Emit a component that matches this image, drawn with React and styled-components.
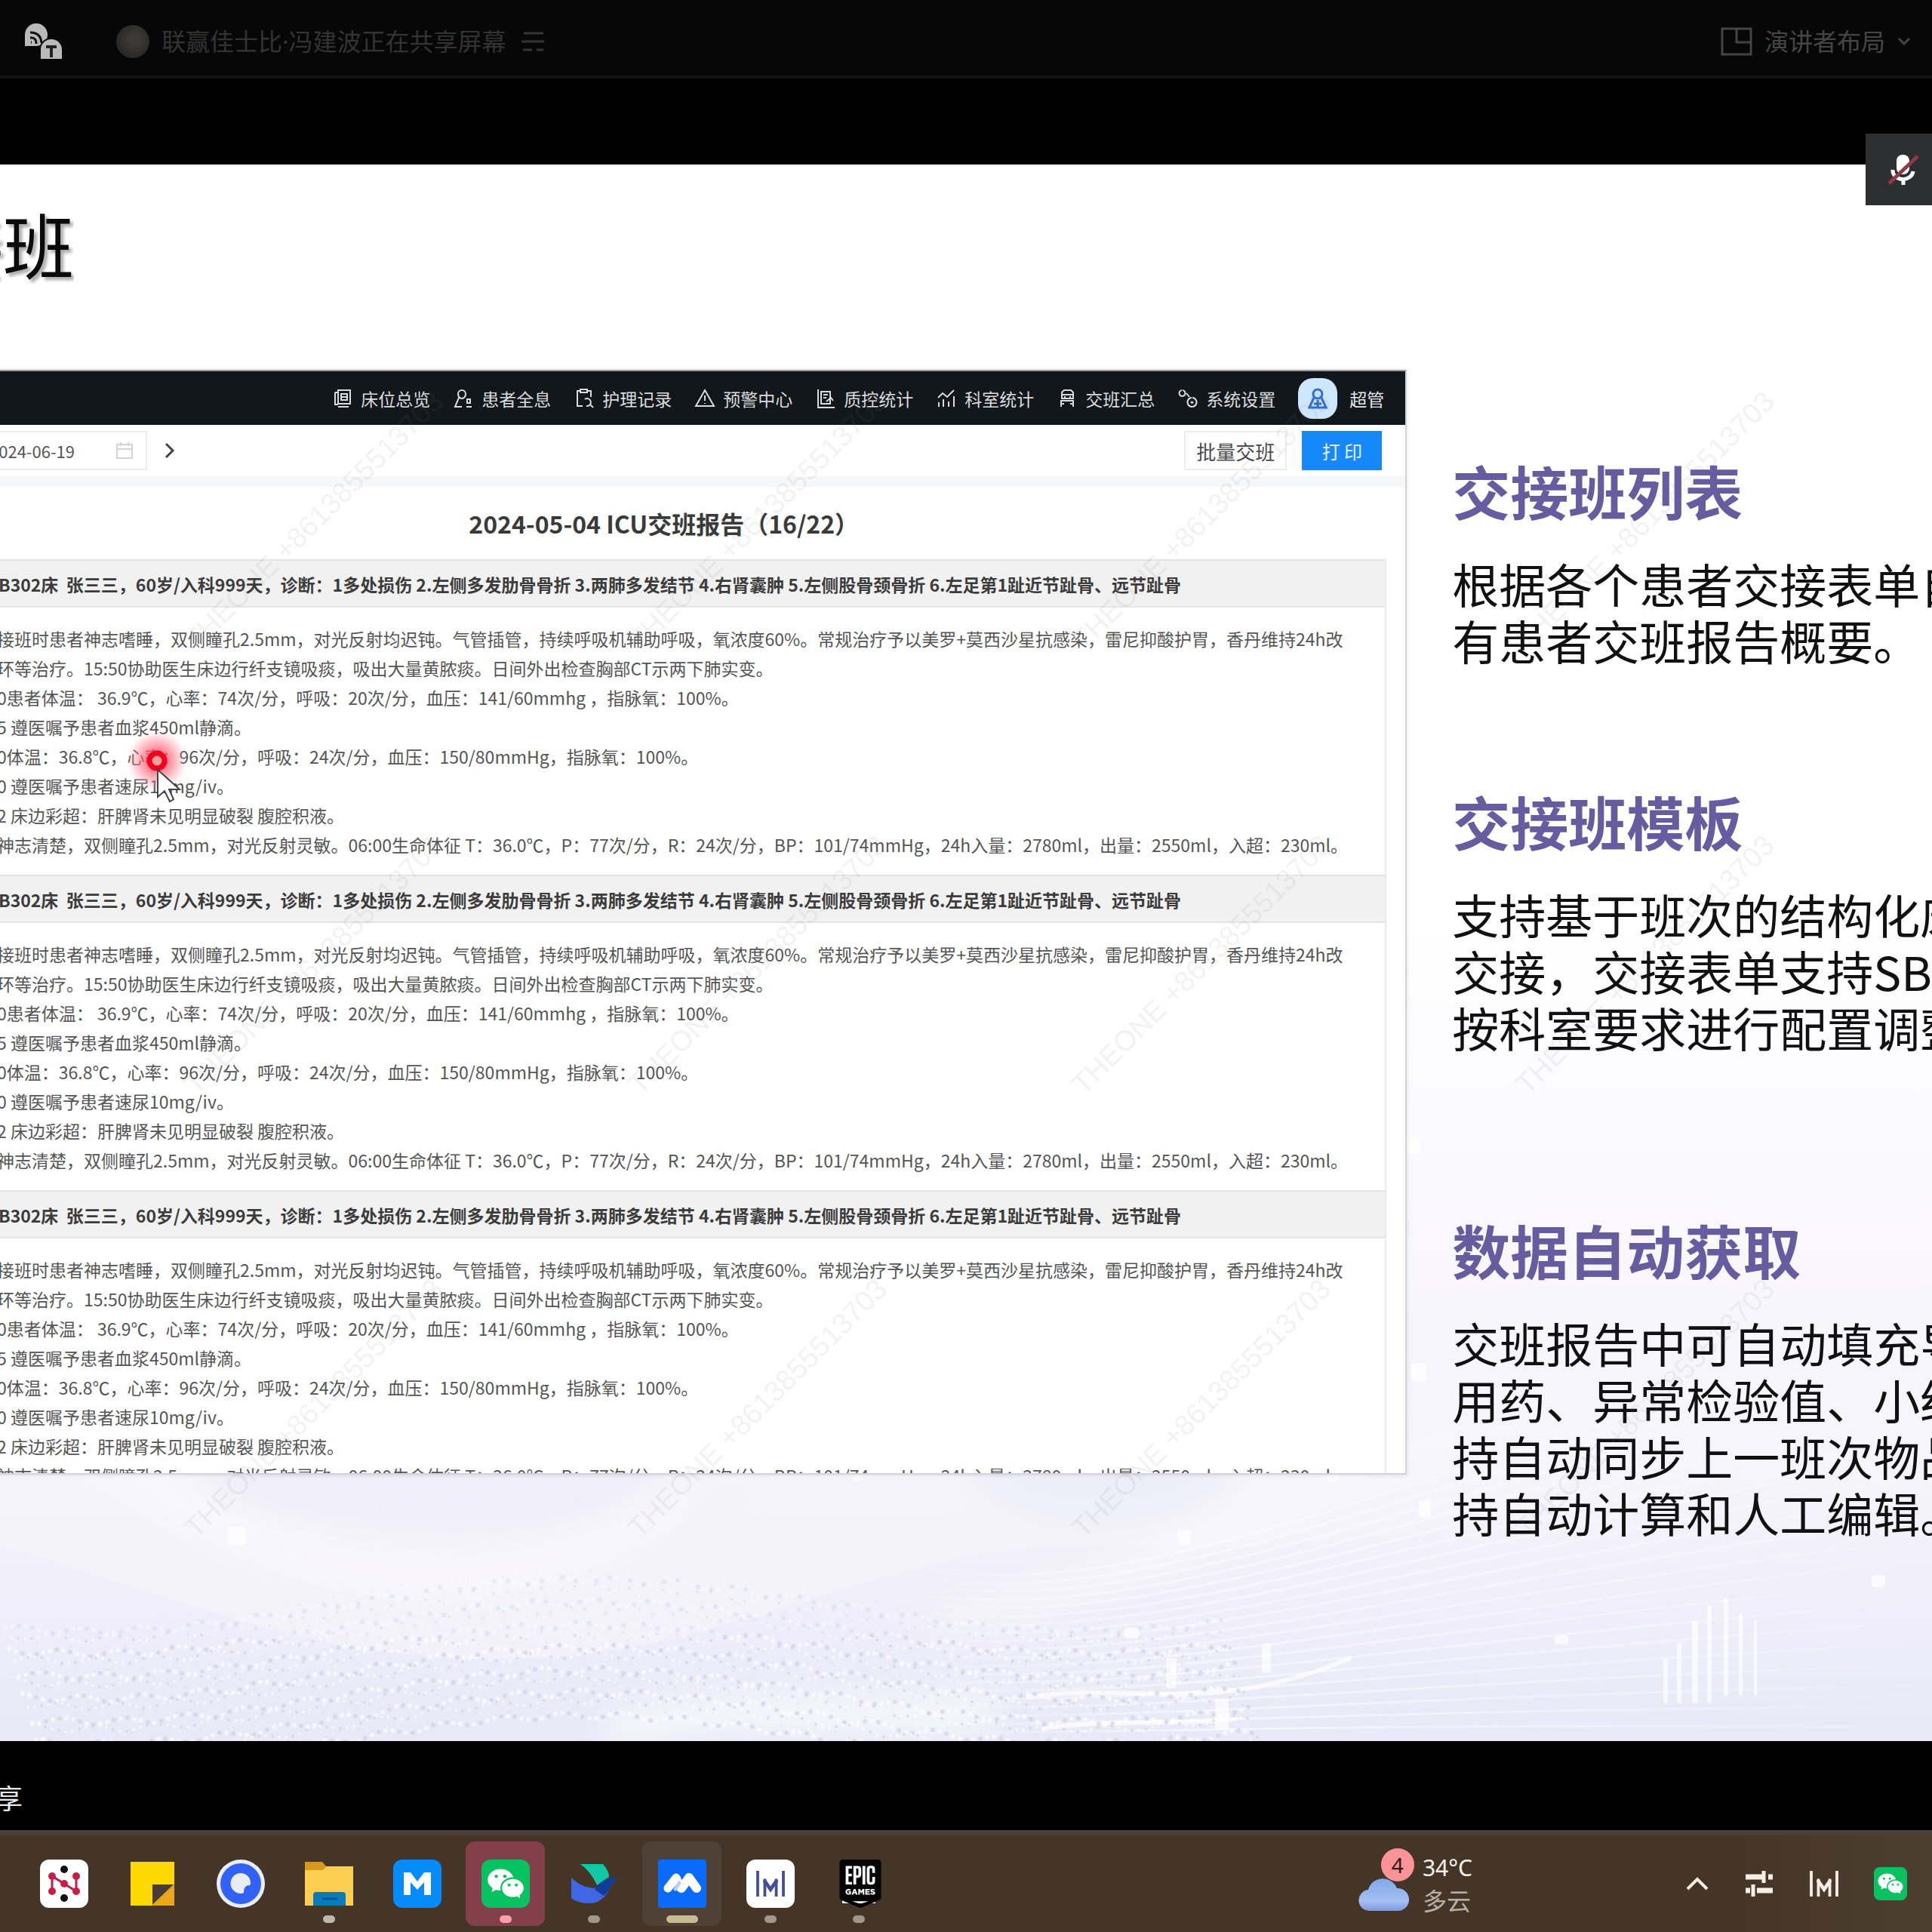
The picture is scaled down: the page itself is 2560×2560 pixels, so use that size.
import React from 'react';
import styled, { createGlobalStyle, css } from 'styled-components';
import { RiWechatFill } from 'react-icons/ri';
import { SiEpicgames } from 'react-icons/si';

const GlobalStyle = createGlobalStyle`
	* {
		box-sizing: border-box;
	}
	body {
		margin: 0;
		background: #000;
		font-family: 'Noto Sans CJK SC', 'Noto Sans', sans-serif;
	}
	h1, h2, h3, p {
		margin: 0;
	}
	button, input {
		font-family: inherit;
	}
	button {
		border: none;
		background: none;
		padding: 0;
		color: inherit;
		cursor: pointer;
	}
	svg {
		display: block;
	}
`;

const Screen = styled.div`
	display: flex;
	flex-direction: column;
	height: 100vh;
	overflow: hidden;
	background: #000;
`;

/* meeting top bar */
const MeetingBar = styled.header`
	height: 104px;
	flex: none;
	display: flex;
	align-items: center;
	justify-content: space-between;
	padding: 10px 28px 0 32px;
	background: #070707;
	border-bottom: 4px solid #121212;
	color: #333;
	font-family: 'Noto Sans', 'Noto Sans CJK SC', sans-serif;
	font-size: 32px;
	line-height: 48px;
`;
const BarGroup = styled.div`
	display: flex;
	align-items: center;
	gap: ${(p) => p.$gap}px;
`;
const Sharer = styled.div`
	display: flex;
	align-items: center;
	gap: 16px;
	margin-left: 50px;
`;
const SharerPhoto = styled.span`
	width: 44px;
	height: 44px;
	border-radius: 50%;
	background: radial-gradient(circle at 55% 45%, #3b3835 0 25%, #2b2b2a 60%, #262626);
`;
const LayoutButton = styled.button`
	display: flex;
	align-items: center;
	gap: 16px;
	font-size: 32px;
	line-height: 48px;
	color: #454545;
`;

/* shared slide */
const Stage = styled.main`
	flex: 1;
	min-height: 0;
	display: flex;
	flex-direction: column;
	padding-top: 114px;
	position: relative;
`;
const MuteBadge = styled.button`
	position: absolute;
	top: 73px;
	right: 0;
	width: 88px;
	height: 95px;
	display: grid;
	place-items: center;
	padding-left: 10px;
	background: #2d2f31;
	z-index: 3;
`;
const Slide = styled.article`
	flex: 1;
	min-height: 0;
	display: flex;
	flex-direction: column;
	position: relative;
	overflow: hidden;
	background: linear-gradient(
		#fff 0 48%,
		#fbfafe 60%,
		#f6f4fc 80%,
		#f1f0fa 100%
	);
`;
const Backdrop = styled.svg`
	position: absolute;
	left: 0;
	bottom: 0;
	width: 100%;
	height: 800px;
`;
const SlideTitle = styled.h1`
	height: 272px;
	width: 98px;
	flex: none;
	display: flex;
	justify-content: flex-end;
	padding-top: 32px;
	overflow: hidden;
	white-space: nowrap;
	font-size: 94px;
	line-height: 144px;
	font-weight: 400;
	color: #0b0b0b;
	text-shadow: 4px 4px 4px rgba(0, 0, 0, 0.35);
`;
const SlideBody = styled.div`
	flex: 1;
	min-height: 0;
	display: grid;
	grid-template-columns: minmax(0, 268fr) minmax(0, 100fr);
	grid-template-rows: minmax(0, 1fr);
	padding-bottom: 353px;
	position: relative;
`;

/* embedded ward application */
const Panel = styled.section`
	margin-left: -24px;
	display: flex;
	flex-direction: column;
	min-height: 0;
	overflow: hidden;
	background: #fff;
	border: 2px solid #d3d3d8;
	border-top-color: #9b9b9b;
	box-shadow: 0 0 6px rgba(0, 0, 0, 0.12);
`;
const Nav = styled.nav`
	height: 71px;
	flex: none;
	display: flex;
	align-items: center;
	justify-content: flex-end;
	gap: 30px;
	padding-right: 28px;
	background: #12171c;
	color: #d9dbdd;
`;
const NavLink = styled.a`
	display: flex;
	align-items: center;
	gap: 10px;
	font-size: 23px;
	line-height: 36px;
	color: inherit;
	text-decoration: none;
`;
const User = styled.button`
	display: flex;
	align-items: center;
	gap: 16px;
	font-size: 23px;
	line-height: 36px;
	color: #e4e6e8;
`;
const UserPhoto = styled.span`
	width: 52px;
	height: 54px;
	border-radius: 20px;
	display: grid;
	place-items: center;
	background: #cfe6ff;
`;
const Toolbar = styled.div`
	height: 68px;
	flex: none;
	display: flex;
	align-items: center;
	justify-content: space-between;
	padding: 0 31px 0 0;
`;
const ToolGroup = styled.div`
	display: flex;
	align-items: center;
	gap: 20px;
`;
const DateField = styled.label`
	width: 217px;
	height: 52px;
	display: flex;
	align-items: center;
	justify-content: space-between;
	padding: 0 16px 0 6px;
	border: 2px solid #ececec;
	color: #d4d4d4;
`;
const DateInput = styled.input`
	width: 140px;
	border: none;
	padding: 0;
	outline: none;
	background: none;
	font-size: 22px;
	color: #555;
`;
const IconButton = styled.button`
	width: 20px;
	height: 36px;
	display: grid;
	place-items: center;
	color: #444;
`;
const ToolButton = styled.button`
	height: 52px;
	padding: 0 16px;
	font-size: 26px;
	color: #4c4c4c;
	background: #fff;
	box-shadow: inset 0 0 0 2px #ececec;
	${(p) =>
		p.$primary &&
		css`
			width: 106px;
			font-size: 24px;
			color: #e8f4ff;
			background: #1788fb;
			box-shadow: none;
		`}
`;
const Report = styled.div`
	flex: 1;
	min-height: 0;
	overflow: hidden;
	padding: 0 25px 0 0;
	border-top: 14px solid #f6f7f8;
`;
const ReportTitle = styled.h2`
	height: 96px;
	padding: 24px 76px 0 20px;
	text-align: center;
	font-size: 32px;
	line-height: 48px;
	font-weight: 700;
	color: #3a3a3a;
`;
const Record = styled.section`
	border-right: 2px solid #ebebeb;
	white-space: nowrap;
	font-size: 23px;
	line-height: 39px;
	color: #555;
`;
const RecordHead = styled.h3`
	height: 64px;
	padding-left: 20px;
	border-top: 2px solid #e4e4e4;
	border-bottom: 2px solid #e6e6e6;
	background: #f1f1f1;
	font-size: 23px;
	line-height: 62px;
	font-weight: 700;
	color: #3c3c3c;
	white-space: pre;
`;
const RecordText = styled.div`
	padding: 22px 0 20px 18px;
`;

/* right-hand copy of the slide */
const Copy = styled.aside`
	padding: 110px 0 0 60px;
	white-space: nowrap;
	overflow: visible;
`;
const Topic = styled.section`
	margin-bottom: ${(p) => p.$space}px;
	h2 {
		font-size: 77px;
		line-height: 100px;
		font-weight: 700;
		color: #675ca0;
		margin-bottom: 36px;
	}
	p {
		font-size: 62px;
		line-height: 75px;
		color: #111;
	}
`;

/* overlays on the slide */
const Watermarks = styled.div`
	position: absolute;
	left: -466px;
	top: 178px;
	display: grid;
	grid-template-columns: repeat(5, 588px);
	grid-auto-rows: 588px;
	place-items: center;
	pointer-events: none;
	font-family: 'Liberation Sans', sans-serif;
	font-size: 38px;
	color: rgba(120, 120, 130, 0.1);
	span {
		white-space: nowrap;
		transform: rotate(-45deg);
	}
`;
const Pointer = styled.svg`
	position: absolute;
	left: 158px;
	top: 740px;
	width: 100px;
	height: 120px;
`;

const ShareStatus = styled.footer`
	height: 118px;
	width: 30px;
	flex: none;
	display: flex;
	justify-content: flex-end;
	padding-top: 47px;
	overflow: hidden;
	font-size: 36px;
	line-height: 54px;
	color: #e8e8e8;
`;

/* windows taskbar */
const Taskbar = styled.footer`
	height: 135px;
	flex: none;
	display: flex;
	align-items: center;
	justify-content: space-between;
	padding: 0 33px 0 26px;
	background: linear-gradient(90deg, #453527 0 90%, #4c3f30);
	border-top: 7px solid #4a403a;
`;
const Apps = styled.div`
	display: flex;
`;
const AppButton = styled.button`
	position: relative;
	width: 117px;
	height: 112px;
	padding: 0 6px;
`;
const AppTile = styled.span`
	height: 112px;
	border-radius: 12px;
	display: grid;
	place-items: center;
	background: ${(p) => p.$tint || 'transparent'};
`;
const RunMark = styled.span`
	position: absolute;
	bottom: 4px;
	left: 0;
	right: 0;
	margin: 0 auto;
	width: ${(p) => (p.$active ? 42 : 16)}px;
	height: 10px;
	border-radius: 5px;
	background: ${(p) => p.$color || '#a0968c'};
`;
const RoundTile = styled.span`
	width: ${(p) => p.$size || 64}px;
	height: ${(p) => p.$size || 64}px;
	border-radius: ${(p) => p.$radius || 12}px;
	display: grid;
	place-items: center;
	background: ${(p) => p.$bg};
	color: #fff;
`;
const EpicMark = styled.span`
	width: 60px;
	height: 64px;
	display: grid;
	place-items: center;
	color: #050505;
	background: linear-gradient(#fff, #fff) center / 44px 52px no-repeat;
`;
const TaskRight = styled.div`
	display: flex;
	align-items: center;
	gap: 282px;
`;
const Weather = styled.button`
	display: flex;
	align-items: center;
	gap: 11px;
	text-align: left;
	font-size: 32px;
	line-height: 43px;
	color: #b9afa4;
	strong {
		display: block;
		font-family: 'Noto Sans', sans-serif;
		font-size: 30px;
		font-weight: 400;
		color: #f7f3ee;
	}
`;
const WeatherIcon = styled.span`
	position: relative;
	width: 74px;
	height: 94px;
	svg {
		margin-top: 38px;
	}
`;
const AlertCount = styled.span`
	position: absolute;
	right: 0;
	top: 0;
	width: 44px;
	height: 44px;
	border-radius: 50%;
	background: #fb9399;
	color: #33161a;
	font-family: 'Noto Sans', sans-serif;
	font-size: 28px;
	line-height: 44px;
	text-align: center;
`;
const Tray = styled.div`
	display: flex;
	align-items: center;
	gap: 46px;
	color: #f5efe6;
`;

const navItems = [
	['床位总览', 'M4 6h4M4 6v16h4M8 3h16v18H8zM12 8h8v8h-8zM12 12h8M8 25h14'],
	['患者全息', 'M12 3a5 5 0 0 1 5 5c0 3-2 6-5 6s-5-3-5-6a5 5 0 0 1 5-5zM8 13l-5 12h9M19 15h4v5h-4zM18 25h7'],
	['护理记录', 'M9 4H5v20h7M9 2h9v4H9zM18 4h5v8M15 15a5 5 0 1 1 2 9M22 22l4 4'],
	['预警中心', 'M14 3L26 24H2zM14 10v7M14 20v1'],
	['质控统计', 'M4 2v24h22M8 5h12v16H8zM11 9h6M11 13h4M15 18l6-5 3 4'],
	['科室统计', 'M3 13l6-6 6 5 9-9M4 25v-6M10 25V15M17 25v-7M24 25V11'],
	['交班汇总', 'M7 14V6l3-3h9l3 3v8zM7 9h15M11 13v-2M18 13v-2M6 25v-8h16v8M6 21h4M18 21h4'],
	['系统设置', 'M6 3a4 4 0 1 0 1 0M19 13a6 6 0 1 0 1 0M19 18a1 1 0 1 0 1 0M12 7l4 5'],
];

const recordHead =
	'B302床  张三三，60岁/入科999天，诊断：1多处损伤 2.左侧多发肋骨骨折 3.两肺多发结节 4.右肾囊肿 5.左侧股骨颈骨折 6.左足第1趾近节趾骨、远节趾骨';

const recordLines = [
	'接班时患者神志嗜睡，双侧瞳孔2.5mm，对光反射均迟钝。气管插管，持续呼吸机辅助呼吸，氧浓度60%。常规治疗予以美罗+莫西沙星抗感染，雷尼抑酸护胃，香丹维持24h改',
	'环等治疗。15:50协助医生床边行纤支镜吸痰，吸出大量黄脓痰。日间外出检查胸部CT示两下肺实变。',
	'0患者体温： 36.9℃，心率：74次/分，呼吸：20次/分，血压：141/60mmhg ，指脉氧：100%。',
	'5 遵医嘱予患者血浆450ml静滴。',
	'0体温：36.8℃，心率：96次/分，呼吸：24次/分，血压：150/80mmHg，指脉氧：100%。',
	'0 遵医嘱予患者速尿10mg/iv。',
	'2 床边彩超：肝脾肾未见明显破裂 腹腔积液。',
	'神志清楚，双侧瞳孔2.5mm，对光反射灵敏。06:00生命体征 T：36.0℃，P：77次/分，R：24次/分，BP：101/74mmHg，24h入量：2780ml，出量：2550ml，入超：230ml。',
];

const topics = [
	{ title: '交接班列表', space: 152, lines: ['根据各个患者交接表单自', '有患者交班报告概要。'] },
	{
		title: '交接班模板',
		space: 207,
		lines: ['支持基于班次的结构化床', '交接，交接表单支持SBAR', '按科室要求进行配置调整'],
	},
	{
		title: '数据自动获取',
		space: 0,
		lines: ['交班报告中可自动填充导', '用药、异常检验值、小结', '持自动同步上一班次物品', '持自动计算和人工编辑。'],
	},
];

// particle wave along the bottom edge of the slide
const dots = [];
for (let row = 0; row < 20; row += 1) {
	for (let col = 0; col < 180; col += 1) {
		const x = col * 9 + (row % 2) * 4 + row * 3;
		const y = 610 + row * 10 + Math.sin(x / 210 + 1) * 34 + Math.sin(col * 7 + row * 3) * 4;
		dots.push([Math.round(x), Math.round(y), 1 + ((row * 5 + col * 3) % 3)]);
	}
}
const threads = Array.from({ length: 20 }, (_, i) => i);
const sparks = [
	[302, 516, 24, 24], [1030, 370, 12, 14], [1130, 440, 12, 16], [1545, 690, 14, 40], [1672, 670, 12, 40],
	[1610, 745, 18, 40], [1490, 650, 20, 14], [1870, 300, 20, 22], [1760, 430, 14, 26], [1880, 480, 16, 24],
	[2060, 660, 18, 12], [2480, 580, 18, 16], [1560, 520, 18, 20], [2204, 690, 6, 60], [2222, 670, 6, 80],
	[2242, 640, 8, 110], [2262, 620, 6, 130], [2284, 610, 6, 130], [2304, 630, 5, 110], [2324, 640, 4, 100],
	[1862, 0, 20, 22],
];

function SlideBackdrop() {
	return (
		<Backdrop viewBox="0 0 2560 800" preserveAspectRatio="none" aria-hidden="true">
			<defs>
				<linearGradient id="haze" x1="0" y1="0" x2="0" y2="1">
					<stop offset="0" stopColor="#e6e4f6" stopOpacity="0" />
					<stop offset="1" stopColor="#dfe0f3" stopOpacity="0.5" />
				</linearGradient>
				<linearGradient id="thread" gradientUnits="userSpaceOnUse" x1="1150" y1="0" x2="2560" y2="0">
					<stop offset="0" stopColor="#fff" stopOpacity="0" />
					<stop offset="0.3" stopColor="#fff" stopOpacity="0.5" />
					<stop offset="0.8" stopColor="#fff" stopOpacity="0.3" />
					<stop offset="1" stopColor="#fff" stopOpacity="0" />
				</linearGradient>
				<filter id="soft" x="-10%" y="-20%" width="120%" height="140%">
					<feGaussianBlur stdDeviation="22" />
				</filter>
			</defs>
			<path d="M0 540C240 610 420 700 700 690C1000 680 1200 520 1500 540C1900 560 2200 440 2560 460V800H0Z" fill="url(#haze)" />
			<g filter="url(#soft)">
				<ellipse cx="620" cy="450" rx="360" ry="70" fill="#f0eef9" />
				<ellipse cx="1460" cy="440" rx="170" ry="70" fill="#eeeef9" />
				<g fill="none" stroke="#fff" strokeOpacity="0.7">
					<path d="M-20 340C160 390 240 540 520 580C780 600 860 480 1060 360" strokeWidth="28" />
					<path d="M800 790C1000 740 1160 780 1320 760" strokeWidth="40" />
					<path d="M1240 640C1500 610 1640 480 1960 390" strokeWidth="20" />
				</g>
			</g>
			<g fill="none" stroke="url(#thread)" strokeWidth="3">
				{threads.map((i) => (
					<path
						key={i}
						d={`M1150 ${560 + i * 12}C1500 ${640 + i * 8} 1760 ${470 + i * 16} 2560 ${250 + i * 28}`}
					/>
				))}
			</g>
			<g fill="none" stroke="#fff" strokeOpacity="0.7" strokeWidth="6">
				<path d="M1360 742C1500 720 1600 770 1790 690" />
				<path d="M1380 784C1460 770 1560 780 1640 770" />
			</g>
			{dots.map(([x, y, r], i) => (
				<circle
					key={i}
					cx={x}
					cy={y}
					r={r}
					fill={(i * 7) % 5 < 3 ? '#fff' : '#ccd0e4'}
					fillOpacity={y < 660 ? 0.35 : 0.6}
				/>
			))}
			{sparks.map(([x, y, w, h]) => (
				<rect key={`${x}-${y}`} x={x} y={y} width={w} height={h} rx="4" fill="#fff" fillOpacity="0.7" />
			))}
		</Backdrop>
	);
}

function LetterM({ width, height, color }) {
	return (
		<svg width={width} height={height} viewBox="0 0 40 36" fill="none" stroke={color} strokeWidth="4">
			<path d="M2 0v36M38 0v36M12 36V11M28 36V11" />
			<path d="M11 13l9 13 9-13" strokeWidth="5" />
		</svg>
	);
}

const apps = [
	{
		name: '导图',
		icon: (
			<RoundTile $bg="#fff">
				<svg width="64" height="64" viewBox="0 0 64 64">
					<path d="M16 42V22l32 20V22" fill="none" stroke="#c41f45" strokeWidth="3" />
					<g fill="#c41f45">
						<circle cx="16" cy="22" r="5" />
						<circle cx="16" cy="42" r="5" />
						<circle cx="32" cy="32" r="5" />
						<circle cx="48" cy="22" r="5" />
						<circle cx="48" cy="42" r="5" />
					</g>
					<circle cx="32" cy="13" r="5" fill="#111" />
					<circle cx="32" cy="51" r="5" fill="#111" />
				</svg>
			</RoundTile>
		),
	},
	{
		name: '便笺',
		icon: (
			<svg width="60" height="60" viewBox="0 0 60 60">
				<path d="M1 1h58v30L31 59H1z" fill="#fed900" />
				<path d="M30 31h28L30 58z" fill="#4b3c33" />
				<path d="M59 31v28H31z" fill="#eda520" />
			</svg>
		),
	},
	{
		name: '夸克',
		icon: (
			<svg width="66" height="66" viewBox="0 0 66 66">
				<circle cx="33" cy="33" r="32" fill="#e8edff" />
				<circle cx="33" cy="33" r="27" fill="#3262f5" />
				<path d="M33 19a13 13 0 0 1 13 13q0 3-1 3-8 0-8 9 0 2-4 2a13 13 0 0 1 0-27z" fill="#e9ecf5" />
			</svg>
		),
	},
	{
		name: '文件资源管理器',
		mark: '#c0b8ae',
		icon: (
			<svg width="66" height="60" viewBox="0 0 66 60">
				<path d="M1 1h23l5 6v12H1z" fill="#d9981b" />
				<path d="M1 12h24l4-5h36v52H1z" fill="#fcce51" />
				<path d="M12 59V45q0-4 4-4h35q4 0 4 4v14z" fill="#0c79b8" />
				<path d="M24 50h20" stroke="#07588c" strokeWidth="3" />
			</svg>
		),
	},
	{
		name: '墨刀',
		icon: (
			<RoundTile $bg="#068bfb">
				<svg width="40" height="32" viewBox="0 0 40 32">
					<path d="M2 31V1h9l9 12 9-12h9v30h-9V14l-9 10-9-10v17z" fill="#fff" />
				</svg>
			</RoundTile>
		),
	},
	{
		name: '微信',
		tint: '#84404a',
		mark: '#ff9fae',
		icon: (
			<RoundTile $bg="#07c260">
				<RiWechatFill size={52} />
			</RoundTile>
		),
	},
	{
		name: '飞书',
		mark: '#a0968c',
		icon: (
			<svg width="64" height="56" viewBox="0 0 64 56">
				<path d="M14 2h30q8 9 8 17L36 30Q28 12 14 2z" fill="#12c7a6" />
				<path d="M2 20q14 14 34 14 10-15 27-13-6 4-11 15-9 18-27 18Q10 54 2 47z" fill="#3f66e4" />
				<path d="M33 36q12-18 30-15-6 4-11 15-3 5-7 8z" fill="#103c9c" />
			</svg>
		),
	},
	{
		name: '腾讯会议',
		tint: '#504136',
		mark: '#c8bb94',
		active: true,
		icon: (
			<RoundTile $bg="#0a6bfb" $radius={4}>
				<svg width="52" height="30" viewBox="0 0 52 30" fill="none" strokeLinecap="round" strokeLinejoin="round">
					<path d="M7 21L18 7l6 14" stroke="#fff" strokeWidth="11" />
					<path d="M25 21L35 7l10 14" stroke="#fff" strokeWidth="12" />
					<path d="M17 22l5-8" stroke="#b5d0ff" strokeWidth="5" />
				</svg>
			</RoundTile>
		),
	},
	{
		name: '墨见',
		mark: '#a0968c',
		icon: (
			<RoundTile $bg="#fff">
				<LetterM width={42} height={34} color="#434f94" />
			</RoundTile>
		),
	},
	{
		name: 'Epic Games',
		mark: '#a0968c',
		icon: (
			<EpicMark>
				<SiEpicgames size={64} />
			</EpicMark>
		),
	},
];

export default function App() {
	return (
		<Screen>
			<GlobalStyle />
			<MeetingBar>
				<BarGroup $gap={20}>
					<svg width="52" height="50" viewBox="0 0 52 50">
						<path d="M1 31V16a15 15 0 1 1 15 15z" fill="#b9b9b9" />
						<path d="M8 20q8-1 8 8M8 13q14 0 15 14M9 26h1" fill="none" stroke="#111" strokeWidth="3" />
						<path d="M21 49V36a15 15 0 0 1 30 0v13z" fill="#b9b9b9" stroke="#070707" strokeWidth="2" />
						<path d="M29 32h14M36 32v14" stroke="#222" strokeWidth="4" />
					</svg>
					<Sharer>
						<SharerPhoto />
						<span>联赢佳士比·冯建波正在共享屏幕</span>
					</Sharer>
					<svg width="32" height="28" viewBox="0 0 32 28" stroke="#353535" strokeWidth="3">
						<path d="M3 3h26M0 14h30M2 25h12M20 25h9" />
					</svg>
				</BarGroup>
				<LayoutButton>
					<svg width="42" height="38" viewBox="0 0 42 38" fill="none" stroke="#454545" strokeWidth="3">
						<path d="M2 2h38v34H2zM21 2v18h19" />
					</svg>
					演讲者布局
					<svg width="18" height="12" viewBox="0 0 18 12" fill="none" stroke="#454545" strokeWidth="3">
						<path d="M2 2l7 7 7-7" />
					</svg>
				</LayoutButton>
			</MeetingBar>

			<Stage>
				<MuteBadge aria-label="已静音">
					<svg width="44" height="44" viewBox="0 0 44 44">
						<rect x="14" y="2" width="17" height="26" rx="8" fill="#fff" />
						<path d="M9 22a13 11 0 0 0 27 2M23 35v7" fill="none" stroke="#fff" strokeWidth="5" />
						<path d="M4 40L42 4" stroke="#8e3a48" strokeWidth="5" />
					</svg>
				</MuteBadge>
				<Slide>
					<SlideBackdrop />
					<SlideTitle>接班</SlideTitle>
					<SlideBody>
						<Panel>
							<Nav>
								{navItems.map(([label, d]) => (
									<NavLink href="#" key={label}>
										<svg width="28" height="28" viewBox="0 0 28 28" fill="none" stroke="currentColor" strokeWidth="2">
											<path d={d} />
										</svg>
										{label}
									</NavLink>
								))}
								<User>
									<UserPhoto>
										<svg width="28" height="30" viewBox="0 0 28 30" fill="none" stroke="#2f6fd0" strokeWidth="3">
											<circle cx="14" cy="9" r="6" />
											<path d="M9 14L3 27h22l-6-13M14 17v9M9 22h10" />
										</svg>
									</UserPhoto>
									超管
								</User>
							</Nav>
							<Toolbar>
								<ToolGroup>
									<DateField>
										<DateInput type="text" aria-label="日期" defaultValue="2024-06-19" />
										<svg width="24" height="24" viewBox="0 0 24 24" fill="none" stroke="currentColor" strokeWidth="2">
											<path d="M2 4h20v18H2zM2 10h20M7 1v5M17 1v5" />
										</svg>
									</DateField>
									<IconButton aria-label="后一天">
										<svg width="14" height="22" viewBox="0 0 14 22" fill="none" stroke="currentColor" strokeWidth="3">
											<path d="M2 2l9 9-9 9" />
										</svg>
									</IconButton>
								</ToolGroup>
								<ToolGroup>
									<ToolButton>批量交班</ToolButton>
									<ToolButton $primary>打 印</ToolButton>
								</ToolGroup>
							</Toolbar>
							<Report>
								<ReportTitle>2024-05-04 ICU交班报告（16/22）</ReportTitle>
								{[0, 1, 2].map((n) => (
									<Record key={n}>
										<RecordHead>{recordHead}</RecordHead>
										<RecordText>
											{recordLines.map((line) => (
												<p key={line}>{line}</p>
											))}
										</RecordText>
									</Record>
								))}
							</Report>
						</Panel>
						<Copy>
							{topics.map((topic) => (
								<Topic key={topic.title} $space={topic.space}>
									<h2>{topic.title}</h2>
									{topic.lines.map((line) => (
										<p key={line}>{line}</p>
									))}
								</Topic>
							))}
						</Copy>
					</SlideBody>
					<Watermarks aria-hidden="true">
						{Array.from({ length: 15 }, (_, i) => (
							<span key={i}>THEONE +8613855513703</span>
						))}
					</Watermarks>
					<Pointer viewBox="0 0 100 120">
						<defs>
							<radialGradient id="glow">
								<stop offset="0.3" stopColor="#ff5068" stopOpacity="0.8" />
								<stop offset="0.7" stopColor="#ff7a8c" stopOpacity="0.4" />
								<stop offset="1" stopColor="#ff9aa8" stopOpacity="0" />
							</radialGradient>
						</defs>
						<circle cx="50" cy="50" r="40" fill="url(#glow)" />
						<circle cx="50" cy="50" r="10" fill="#ff9c9c" stroke="#f0001f" strokeWidth="7" />
						<path d="M51 62v36l9-8 7 14 5-3-6-13h14z" fill="#fff" stroke="#444" strokeWidth="2" />
					</Pointer>
				</Slide>
			</Stage>

			<ShareStatus>享</ShareStatus>

			<Taskbar>
				<Apps>
					{apps.map((app) => (
						<AppButton key={app.name} aria-label={app.name}>
							<AppTile $tint={app.tint}>{app.icon}</AppTile>
							{app.mark && <RunMark $color={app.mark} $active={app.active} />}
						</AppButton>
					))}
				</Apps>
				<TaskRight>
					<Weather>
						<WeatherIcon>
							<svg width="68" height="46" viewBox="0 0 68 46">
								<defs>
									<linearGradient id="cloud" x1="0" y1="0" x2="0" y2="1">
										<stop offset="0" stopColor="#7fa9ea" />
										<stop offset="0.7" stopColor="#a6bff2" />
										<stop offset="1" stopColor="#7d98dc" />
									</linearGradient>
								</defs>
								<path d="M16 45a14 14 0 0 1-3-28 20 20 0 0 1 38-2 15 15 0 0 1 2 30z" fill="url(#cloud)" />
							</svg>
							<AlertCount>4</AlertCount>
						</WeatherIcon>
						<span>
							<strong>34°C</strong>
							多云
						</span>
					</Weather>
					<Tray>
						<svg width="32" height="20" viewBox="0 0 32 20" fill="none" stroke="currentColor" strokeWidth="4">
							<path d="M3 17L16 4l13 13" />
						</svg>
						<svg width="40" height="36" viewBox="0 0 40 36" fill="none" stroke="currentColor">
							<path d="M2 9h22M32 9h6M2 27h6M17 27h21" strokeWidth="7" />
							<path d="M26 1v16M12 19v16" strokeWidth="5" />
						</svg>
						<LetterM width={40} height={34} color="#f5efe6" />
						<RoundTile $bg="#07c260" $size={44} $radius={8}>
							<RiWechatFill size={36} />
						</RoundTile>
					</Tray>
				</TaskRight>
			</Taskbar>
		</Screen>
	);
}
